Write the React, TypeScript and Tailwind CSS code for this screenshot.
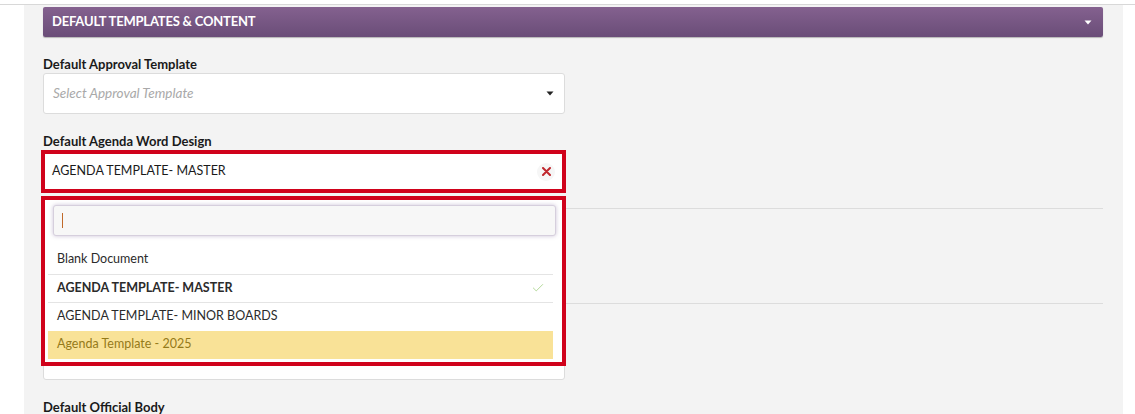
import React from "react";
import { Check } from "lucide-react";

function Caret({ color }: { color: string }) {
  return (
    <svg width="8" height="5" viewBox="0 0 8 5" className="shrink-0">
      <path d="M0.5 0.5 L7.5 0.5 L4 4.5 Z" fill={color} />
    </svg>
  );
}

const options = [
  { label: "Blank Document", selected: false, active: false },
  { label: "AGENDA TEMPLATE- MASTER", selected: true, active: false },
  { label: "AGENDA TEMPLATE- MINOR BOARDS", selected: false, active: false },
  { label: "Agenda Template - 2025", selected: false, active: true },
];

export default function App() {
  return (
    <div
      className="h-[414px] w-[1135px] overflow-hidden bg-white pt-[4px]"
      style={{ fontFamily: "Lato, 'Open Sans', sans-serif" }}
    >
      <div className="flex h-full border-t border-[#d8d8d8]">
        <div className="w-[24px] shrink-0" />
        <div className="w-[1099px] shrink-0 bg-[#f3f3f3] pl-[19px] pr-[20px] pt-[2px]">
          {/* section header */}
          <div className="flex h-[30px] items-center justify-between rounded-[2px] bg-gradient-to-b from-[#84618f] to-[#6a4d78] pl-[9px] pr-[11px] shadow-[0_1px_1px_rgba(0,0,0,0.25)]">
            <span className="text-[13px] font-bold tracking-[-0.2px] text-white">
              DEFAULT TEMPLATES &amp; CONTENT
            </span>
            <Caret color="#ffffff" />
          </div>

          {/* approval template */}
          <div className="mt-[18px] text-[13px] font-bold leading-[18px] text-[#1a1a1a]">
            Default Approval Template
          </div>
          <div className="flex h-[41px] w-[522px] items-center justify-between rounded-[3px] border border-[#dcdcdc] bg-white pl-[9px] pr-[10px]">
            <span className="text-[13.5px] italic text-[#a9a9a9]">Select Approval Template</span>
            <Caret color="#222222" />
          </div>

          {/* agenda word design */}
          <div className="mt-[18px] text-[13px] font-bold leading-[18px] text-[#1a1a1a]">
            Default Agenda Word Design
          </div>
          <div className="relative -ml-[2px] w-[525px]">
            <div className="flex h-[43px] items-center justify-between border-4 border-[#d0021b] bg-white pl-[7px] pr-[7px]">
              <span className="text-[12.5px] text-[#1a1a1a]">AGENDA TEMPLATE- MASTER</span>
              <span className="flex h-[18px] w-[18px] items-center justify-center rounded-full bg-[#f6f6f6]">
                <svg width="9" height="9" viewBox="0 0 9 9">
                  <path d="M1 1 L8 8 M8 1 L1 8" stroke="#c0272d" strokeWidth="2" strokeLinecap="round" />
                </svg>
              </span>
            </div>

            {/* open dropdown */}
            <div className="absolute left-0 top-[46px] z-10 h-[170px] w-[525px] border-4 border-[#d0021b] bg-white">
              <div className="ml-[8px] mr-[6px] mt-[5px] flex h-[31px] items-center rounded-[3px] border border-[#d6cfdd] bg-[#f7f7f7] pl-[8px] shadow-[0_0_4px_rgba(110,80,140,0.35)]">
                <span className="h-[15px] w-px bg-[#c0692a]" />
              </div>
              <ul className="ml-[3px] mr-[9px] mt-[9px]">
                {options.map((o, i) => (
                  <li
                    key={o.label}
                    className={`flex h-[28.5px] items-center justify-between pl-[9px] pr-[8px] text-[12.5px] ${
                      i > 0 && !o.active ? "border-t border-[#e4e4e4]" : ""
                    } ${o.active ? "bg-[#f9e297] text-[#957a1a]" : "text-[#2b2b2b]"} ${
                      o.selected ? "font-bold text-[#1a1a1a]" : ""
                    }`}
                  >
                    <span>{o.label}</span>
                    {o.selected && <Check size={14} strokeWidth={1.5} className="text-[#a9d38c]" />}
                  </li>
                ))}
              </ul>
            </div>
          </div>

          {/* fields hidden behind the dropdown */}
          <div className="mt-[15px] border-t border-[#dcdcdc]" />
          <div className="h-[94px]" />
          <div className="border-t border-[#dcdcdc]" />
          <div className="mt-[9px] text-[13px] font-bold leading-[18px] text-[#1a1a1a]">&nbsp;</div>
          <div className="h-[49px] w-[522px] rounded-[3px] border border-[#dcdcdc] bg-white" />

          <div className="mt-[18px] text-[13px] font-bold leading-[18px] text-[#1a1a1a]">
            Default Official Body
          </div>
        </div>
      </div>
    </div>
  );
}
